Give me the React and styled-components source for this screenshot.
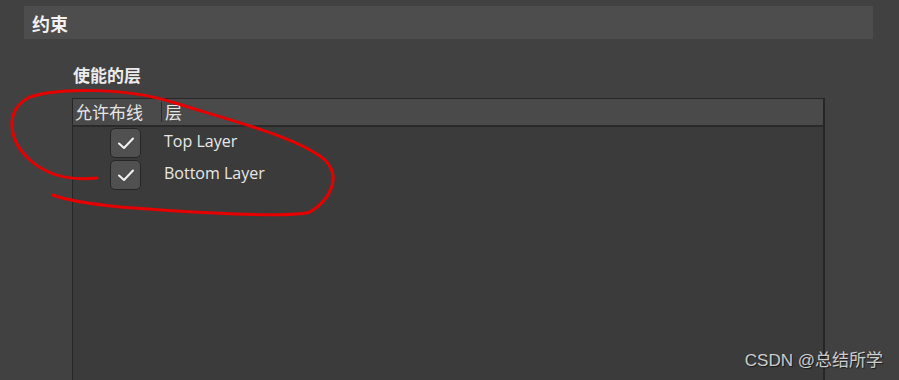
import React from "react";
import styled, { createGlobalStyle } from "styled-components";

const GlobalStyle = createGlobalStyle`
  html, body {
    margin: 0;
    padding: 0;
    background: #414141;
    overflow: hidden;
  }
  body {
    font-family: "Open Sans", "Noto Sans CJK SC", sans-serif;
  }
`;

const Page = styled.div`
  position: relative;
  width: 899px;
  height: 380px;
  overflow: hidden;
  background: #414141;
  padding-top: 6px;
  box-sizing: border-box;
`;

const SectionBar = styled.div`
  margin: 0 26px 0 24px;
  height: 33px;
  display: flex;
  align-items: center;
  padding-left: 8px;
  background: #4d4d4d;
  color: #f2f2f2;
  font-family: "Noto Sans CJK SC", sans-serif;
  font-weight: 700;
  font-size: 18px;
`;

const Group = styled.div`
  padding: 25px 0 0 72px;
  width: 753px;
`;

const GroupTitle = styled.div`
  font-family: "Noto Sans CJK SC", sans-serif;
  font-weight: 700;
  font-size: 17px;
  color: #ececec;
  height: 22px;
  line-height: 22px;
  padding-left: 1px;
  margin-bottom: 12px;
`;

const Table = styled.div`
  border: 1px solid #262626;
  border-right-width: 2px;
  background: #3b3b3b;
  height: 300px;
`;

const HeadRow = styled.div`
  display: flex;
  align-items: center;
  height: 26px;
  background: #4a4a4a;
  border-bottom: 2px solid #2a2a2a;
  font-family: "Noto Sans CJK SC", sans-serif;
  font-size: 17px;
  color: #e6e6e6;
`;

const HeadCell = styled.div`
  width: ${({ $w }) => ($w ? `${$w}px` : "auto")};
  flex: ${({ $w }) => ($w ? "none" : "1")};
  padding-left: ${({ $pad }) => $pad}px;
  box-sizing: border-box;
  height: 20px;
  line-height: 20px;
  border-right: ${({ $sep }) => ($sep ? "1px solid #2b2b2b" : "none")};
  white-space: nowrap;
`;

const Body = styled.div`
  padding-top: 1px;
  display: flex;
  flex-direction: column;
  gap: 2px;
`;

const Row = styled.div`
  display: flex;
  align-items: center;
  height: 30px;
`;

const CheckCell = styled.div`
  width: 90px;
  padding-left: 37px;
  box-sizing: border-box;
`;

const Check = styled.div`
  width: 31px;
  height: 30px;
  box-sizing: border-box;
  border: 1px solid #262626;
  border-radius: 5px;
  background: #505050;
  display: flex;
  align-items: center;
  justify-content: center;
`;

const LayerName = styled.div`
  font-family: "Open Sans", sans-serif;
  font-size: 16px;
  color: #e8e8e8;
  padding-left: 1px;
  margin-top: -5px;
`;

const Annotation = styled.svg`
  position: absolute;
  left: 0;
  top: 0;
  pointer-events: none;
`;

const Watermark = styled.div`
  position: absolute;
  right: 16px;
  bottom: 9px;
  font-family: "Liberation Sans", "Noto Sans CJK SC", sans-serif;
  font-size: 17px;
  color: rgba(235, 235, 235, 0.85);
  text-shadow: 1px 1px 1px rgba(0, 0, 0, 0.6);
`;

const Tick = () => (
  <svg width="18" height="14" viewBox="0 0 18 14">
    <path d="M2 7.5 L7 12 L16 2.5" fill="none" stroke="#f2f2f2" strokeWidth="2" strokeLinecap="round" strokeLinejoin="round" />
  </svg>
);

const layers = ["Top Layer", "Bottom Layer"];

const App = () => (
  <>
    <GlobalStyle />
    <Page>
      <SectionBar>约束</SectionBar>
      <Group>
        <GroupTitle>使能的层</GroupTitle>
        <Table>
          <HeadRow>
            <HeadCell $w={89} $pad={2} $sep>允许布线</HeadCell>
            <HeadCell $pad={3}>层</HeadCell>
          </HeadRow>
          <Body>
            {layers.map((name) => (
              <Row key={name}>
                <CheckCell>
                  <Check>
                    <Tick />
                  </Check>
                </CheckCell>
                <LayerName>{name}</LayerName>
              </Row>
            ))}
          </Body>
        </Table>
      </Group>
      <Annotation width="899" height="380">
        <path
          d="M97 178 C70 181, 48 176, 30 160 C8 140, 4 110, 30 97 C60 87, 130 88, 175 103 C230 120, 300 138, 325 160 C342 177, 330 200, 310 212 C290 218, 200 213, 120 207 C90 204, 66 200, 53 195"
          fill="none"
          stroke="#e60000"
          strokeWidth="3"
          strokeLinecap="round"
        />
      </Annotation>
      <Watermark>CSDN @总结所学</Watermark>
    </Page>
  </>
);

export default App;
